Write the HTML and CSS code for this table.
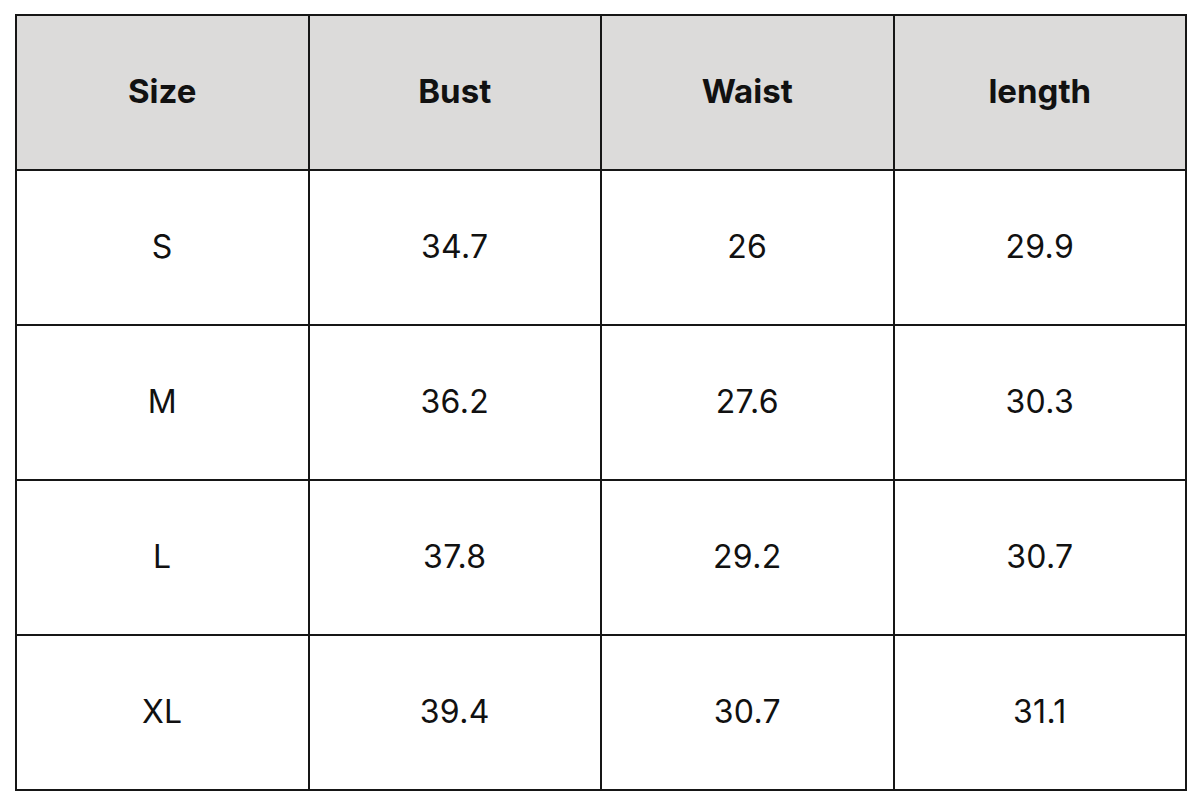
FILE: index.html
```html
<!DOCTYPE html>
<html>
<head>
<meta charset="utf-8">
<link rel="stylesheet" href="styles.css">
</head>
<body>
<table class="size-table">
  <thead>
    <tr><th>Size</th><th>Bust</th><th>Waist</th><th>length</th></tr>
  </thead>
  <tbody>
    <tr><td>S</td><td>34.7</td><td>26</td><td>29.9</td></tr>
    <tr><td>M</td><td>36.2</td><td>27.6</td><td>30.3</td></tr>
    <tr><td>L</td><td>37.8</td><td>29.2</td><td>30.7</td></tr>
    <tr><td>XL</td><td>39.4</td><td>30.7</td><td>31.1</td></tr>
  </tbody>
</table>
</body>
</html>
```

FILE: styles.css
```css
html, body {
  margin: 0;
  padding: 0;
  background: #ffffff;
}
body {
  padding: 14px 0 0 15px;
  font-family: "Inter", "Open Sans", sans-serif;
  color: #111111;
}
.size-table {
  border-collapse: collapse;
  width: 1172px;
  table-layout: fixed;
}
.size-table th,
.size-table td {
  border: 2px solid #161616;
  height: 155px;
  padding: 0 0 2px 0;
  text-align: center;
  vertical-align: middle;
  box-sizing: border-box;
}
.size-table th {
  background: #dcdbda;
  font-weight: 700;
  font-size: 33px;
  padding-bottom: 4px;
}
.size-table td {
  font-weight: 400;
  font-size: 32px;
  letter-spacing: 0.3px;
}
```
